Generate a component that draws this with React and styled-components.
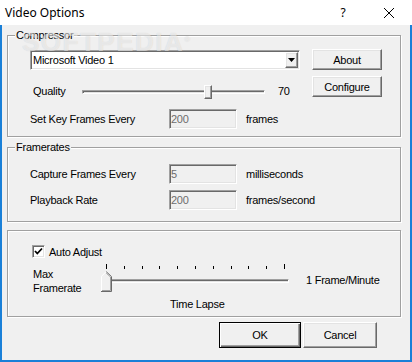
import React from "react";
import styled, { createGlobalStyle, css } from "styled-components";

const GlobalStyle = createGlobalStyle`
  html, body { margin: 0; padding: 0; background: #f0f0f0; }
  * { box-sizing: border-box; }
`;

// classic 3D edges
const sunken = css`
  border: 1px solid;
  border-color: #a0a0a0 #fff #fff #a0a0a0;
  box-shadow: inset 1px 1px 0 #696969, inset -1px -1px 0 #e3e3e3;
`;

const raised = css`
  border: 1px solid;
  border-color: #fff #696969 #696969 #fff;
  box-shadow: inset -1px -1px 0 #a0a0a0, inset 1px 1px 0 #e3e3e3;
  background: #f0f0f0;
`;

const Window = styled.div`
  position: relative;
  width: 412px;
  height: 362px;
  display: flex;
  flex-direction: column;
  overflow: hidden;
  font-family: "Liberation Sans", Arial, sans-serif;
  font-size: 11px;
  color: #000;
`;

const TitleBar = styled.div`
  height: 25px;
  flex: none;
  display: flex;
  align-items: center;
  background: #fff;
`;

const Title = styled.div`
  padding-left: 5px;
  font-family: "Noto Sans", sans-serif;
  font-size: 12px;
`;

const CaptionButton = styled.div`
  width: 46px;
  height: 25px;
  display: flex;
  align-items: center;
  justify-content: center;
  font-family: "Noto Sans", sans-serif;
  font-size: 12px;
  ${(p) => p.$first && "margin-left: auto;"}
`;

const Body = styled.div`
  flex: 1;
  display: flex;
  flex-direction: column;
  background: #f0f0f0;
  border: 2px solid #1a80d8;
  border-top: 0;
  padding: 10px 9px 0 5px;
  letter-spacing: -0.25px;
`;

const GroupBox = styled.div`
  position: relative;
  border: 1px solid #a0a0a0;
  box-shadow: inset 1px 1px 0 #fff, 1px 1px 0 #fff;
  padding: ${(p) => `${p.$pt}px 0 ${p.$pb}px ${p.$pl}px`};
  margin-bottom: ${(p) => p.$mb}px;
`;

const GroupCaption = styled.div`
  position: absolute;
  top: -8px;
  left: 7px;
  padding: 0 1px;
  line-height: 14px;
  background: #f0f0f0;
`;

const Split = styled.div`
  display: flex;
  align-items: flex-start;
`;

const Column = styled.div`
  width: ${(p) => p.$w}px;
  display: flex;
  flex-direction: column;
`;

const ButtonStack = styled.div`
  margin-left: 12px;
  display: flex;
  flex-direction: column;
  gap: 6px;
`;

const Rows = styled.div`
  display: flex;
  flex-direction: column;
  gap: 6px;
`;

const Row = styled.div`
  height: ${(p) => p.$h || 20}px;
  margin-top: ${(p) => p.$mt || 0}px;
  display: flex;
  align-items: center;
`;

const Label = styled.div`
  width: ${(p) => p.$w}px;
  padding-left: ${(p) => p.$indent || 0}px;
  flex: none;
  white-space: nowrap;
`;

const Unit = styled.div`
  margin-left: ${(p) => p.$ml || 9}px;
  white-space: nowrap;
`;

const Field = styled.input`
  ${sunken};
  width: 68px;
  height: 20px;
  padding: 0 0 0 1px;
  margin: 0;
  background: #f0f0f0;
  color: #6d6d6d;
  font-family: inherit;
  font-size: 11px;
  letter-spacing: inherit;
  outline: none;
`;

const Combo = styled.div`
  ${sunken};
  margin-top: 1px;
  height: 20px;
  display: flex;
  align-items: center;
  background: #fff;
  padding-left: 2px;
`;

const ComboText = styled.div`
  flex: 1;
`;

const ComboArrow = styled.div`
  ${raised};
  width: 13px;
  height: 16px;
  margin-right: 1px;
  display: flex;
  align-items: center;
  justify-content: center;
`;

const PushButton = styled.button`
  ${raised};
  width: ${(p) => p.$w}px;
  height: ${(p) => p.$h}px;
  padding: 0;
  margin: 0;
  font-family: inherit;
  font-size: 11px;
  letter-spacing: inherit;
  color: #000;
  ${(p) =>
    p.$default &&
    css`
      border: 1px solid #000;
      box-shadow: inset 1px 1px 0 #fff, inset -1px -1px 0 #696969,
        inset -2px -2px 0 #a0a0a0;
    `}
`;

const Track = styled.div`
  position: relative;
  flex: none;
  width: ${(p) => p.$w}px;
  height: ${(p) => p.$h}px;
`;

const Channel = styled.div`
  position: absolute;
  top: ${(p) => p.$top}px;
  left: ${(p) => p.$left || 0}px;
  width: ${(p) => p.$w}px;
  height: 4px;
  border: 1px solid;
  border-color: #a0a0a0 #fff #fff #a0a0a0;
  background: #e3e3e3;
  box-shadow: inset 1px 1px 0 #696969;
`;

const BoxThumb = styled.div`
  ${raised};
  position: absolute;
  top: 4px;
  width: 8px;
  height: 14px;
`;

const PointThumb = styled.svg`
  position: absolute;
  top: 9px;
  left: 0;
`;

const Ticks = styled.div`
  margin-left: 5px;
  width: 179px;
  height: 7px;
  display: flex;
  justify-content: space-between;
  align-items: flex-end;
  padding-top: 2px;
`;

const Tick = styled.span`
  width: 1px;
  height: ${(p) => (p.$long ? 5 : 3)}px;
  background: #000;
`;

const Value = styled.div`
  margin-left: 13px;
`;

const CheckRow = styled.div`
  height: 13px;
  display: flex;
  align-items: center;
`;

const CheckBox = styled.div`
  ${sunken};
  width: 13px;
  height: 13px;
  background: #fff;
  display: flex;
  align-items: center;
  justify-content: center;
`;

const CheckText = styled.div`
  margin-left: 4px;
`;

const SliderRow = styled.div`
  margin-top: 4px;
  height: 30px;
  display: flex;
  align-items: flex-start;
`;

const StackLabel = styled.div`
  width: 69px;
  flex: none;
  padding: 5px 0 0 1px;
  line-height: 14px;
`;

const EndLabel = styled.div`
  margin: 11px 0 0 14px;
  line-height: 14px;
  white-space: nowrap;
`;

const Caption = styled.div`
  margin: 5px 0 0 138px;
  line-height: 14px;
`;

const Footer = styled.div`
  display: flex;
  justify-content: flex-end;
  gap: 2px;
  padding-right: 24px;
`;

const Watermark = styled.div`
  position: absolute;
  top: 29px;
  left: 22px;
  font-family: "Liberation Sans", Arial, sans-serif;
  font-weight: bold;
  font-size: 26px;
  line-height: 26px;
  letter-spacing: 1.5px;
  color: rgba(255, 255, 255, 0.55);
  text-shadow: 0 0 1px rgba(0, 0, 0, 0.15);
  pointer-events: none;
  sup {
    font-size: 8px;
    vertical-align: top;
    position: relative;
    top: -2px;
    letter-spacing: 0;
  }
`;

function QualitySlider({ value, max }) {
  const width = 183;
  const left = Math.round((value / max) * (width - 8));
  return (
    <Track $w={width} $h={20}>
      <Channel $top={9} $w={width} />
      <BoxThumb style={{ left }} />
    </Track>
  );
}

function FramerateSlider() {
  return (
    <Track $w={191} $h={30}>
      <Ticks>
        {Array.from({ length: 11 }).map((_, i) => (
          <Tick key={i} $long={i === 0 || i === 10} />
        ))}
      </Ticks>
      <Channel $top={17} $left={3} $w={185} />
      <PointThumb width="11" height="21" viewBox="0 0 11 21">
        <polygon points="0,5 5,0 10,5 10,20 0,20" fill="#f0f0f0" />
        <path d="M0.5 20 V5.3 L5.2 0.6" stroke="#fff" fill="none" />
        <path d="M5.2 0.6 L10.5 5.6 V20.5 H0" stroke="#696969" fill="none" />
        <path d="M5.2 2 L9.5 6 V19.5 H1" stroke="#a0a0a0" fill="none" />
      </PointThumb>
    </Track>
  );
}

function App() {
  return (
    <Window>
      <GlobalStyle />
      <TitleBar>
        <Title>Video Options</Title>
        <CaptionButton $first>?</CaptionButton>
        <CaptionButton>
          <svg width="10" height="10" viewBox="0 0 10 10">
            <path d="M0 0 L10 10 M10 0 L0 10" stroke="#000" strokeWidth="1" />
          </svg>
        </CaptionButton>
      </TitleBar>
      <Body>
        <GroupBox $pt={13} $pb={7} $pl={22} $mb={10}>
          <GroupCaption>Compressor</GroupCaption>
          <Split>
            <Column $w={270}>
              <Combo>
                <ComboText>Microsoft Video 1</ComboText>
                <ComboArrow>
                  <svg width="7" height="4" viewBox="0 0 7 4">
                    <polygon points="0,0 7,0 3.5,4" fill="#000" />
                  </svg>
                </ComboArrow>
              </Combo>
              <Row $mt={11}>
                <Label $w={52} $indent={3}>Quality</Label>
                <QualitySlider value={70} max={100} />
                <Value>70</Value>
              </Row>
              <Row $mt={8}>
                <Label $w={139}>Set Key Frames Every</Label>
                <Field disabled value="200" readOnly />
                <Unit>frames</Unit>
              </Row>
            </Column>
            <ButtonStack>
              <PushButton $w={70} $h={21}>About</PushButton>
              <PushButton $w={70} $h={21}>Configure</PushButton>
            </ButtonStack>
          </Split>
        </GroupBox>

        <GroupBox $pt={16} $pb={11} $pl={22} $mb={8}>
          <GroupCaption>Framerates</GroupCaption>
          <Rows>
            <Row>
              <Label $w={139}>Capture Frames Every</Label>
              <Field disabled value="5" readOnly />
              <Unit>milliseconds</Unit>
            </Row>
            <Row>
              <Label $w={139}>Playback Rate</Label>
              <Field disabled value="200" readOnly />
              <Unit>frames/second</Unit>
            </Row>
          </Rows>
        </GroupBox>

        <GroupBox $pt={14} $pb={5} $pl={24} $mb={5}>
          <CheckRow>
            <CheckBox>
              <svg width="9" height="9" viewBox="0 0 9 9">
                <polyline points="1,4 3.3,6.5 8,1.5" fill="none" stroke="#000" strokeWidth="1.8" />
              </svg>
            </CheckBox>
            <CheckText>Auto Adjust</CheckText>
          </CheckRow>
          <SliderRow>
            <StackLabel>
              Max
              <br />
              Framerate
            </StackLabel>
            <FramerateSlider />
            <EndLabel>1 Frame/Minute</EndLabel>
          </SliderRow>
          <Caption>Time Lapse</Caption>
        </GroupBox>

        <Footer>
          <PushButton $w={82} $h={26} $default>OK</PushButton>
          <PushButton $w={74} $h={26}>Cancel</PushButton>
        </Footer>
      </Body>
      <Watermark>
        SOFTPEDIA<sup>®</sup>
      </Watermark>
    </Window>
  );
}

export default App;
